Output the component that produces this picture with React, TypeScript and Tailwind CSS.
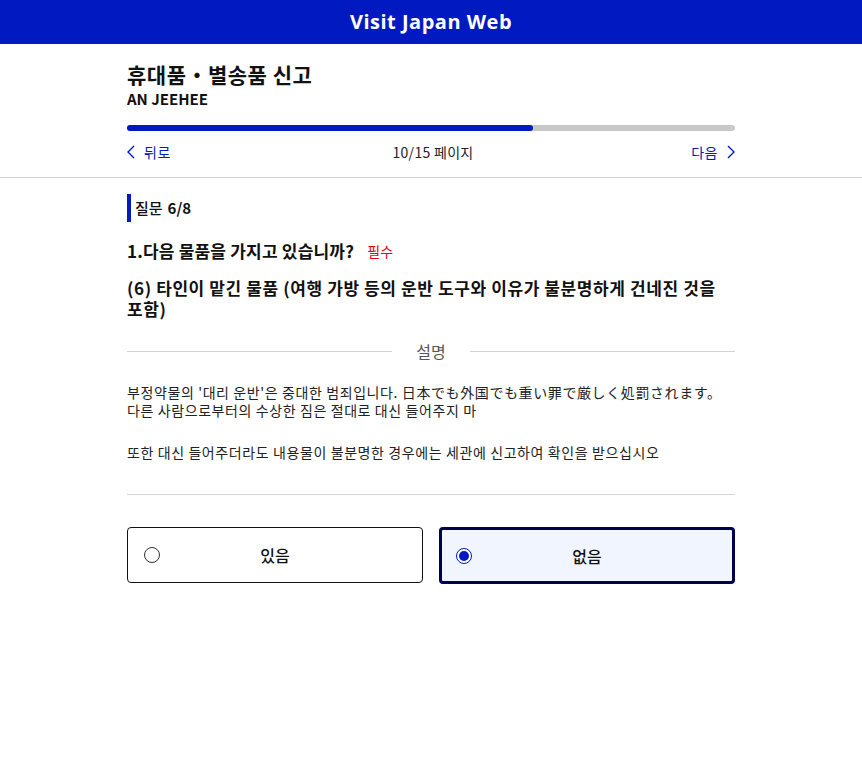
import React from 'react';

const kr = { fontFamily: '"Noto Sans CJK KR", "Noto Sans", sans-serif' };

const Radio = ({ checked }: { checked: boolean }) => (
  <span
    className={`flex h-[16px] w-[16px] items-center justify-center rounded-full border ${
      checked ? 'border-[#0019c0]' : 'border-[#333]'
    } bg-white`}
  >
    {checked && <span className="h-[10px] w-[10px] rounded-full bg-[#0019c0]" />}
  </span>
);

const App = () => {
  return (
    <div className="min-h-[760px] bg-white text-[#111]" style={kr}>
      <header className="flex h-[44px] items-center justify-center bg-[#0019c0]">
        <span
          className="text-[20px] font-bold tracking-[0.5px] text-white"
          style={{ fontFamily: '"Open Sans", sans-serif' }}
        >
          Visit Japan Web
        </span>
      </header>

      <section className="border-b border-[#cfcfcf]">
        <div className="mx-auto w-[608px] pt-[15px] pb-[15px]">
          <h1 className="text-[21px] font-bold leading-[30px] tracking-[0.5px]">휴대품・별송품 신고</h1>
          <p className="text-[15px] font-bold leading-[20px]">AN JEEHEE</p>
          <div className="mt-[16px] h-[6px] w-full rounded-full bg-[#c8c8c8]">
            <div className="h-full w-[66.7%] rounded-full bg-[#0019c0]" />
          </div>
          <div className="mt-[11px] flex items-center justify-between text-[14px] leading-[20px]">
            <button className="flex items-center gap-[9px] tracking-[0.5px] text-[#0019c0]">
              <svg width="8" height="14" viewBox="0 0 8 14" fill="none">
                <path d="M7 1L1 7l6 6" stroke="#0019c0" strokeWidth="1.4" />
              </svg>
              뒤로
            </button>
            <span className="pl-[4px] tracking-[0.3px] text-[#222]">10/15 페이지</span>
            <button className="flex items-center gap-[9px] tracking-[0.5px] text-[#0019c0]">
              다음
              <svg width="8" height="14" viewBox="0 0 8 14" fill="none">
                <path d="M1 1l6 6-6 6" stroke="#0019c0" strokeWidth="1.4" />
              </svg>
            </button>
          </div>
        </div>
      </section>

      <main className="mx-auto w-[608px] pt-[16px]">
        <div className="flex h-[28px] items-center border-l-[4px] border-[#0019c0] pl-[4px] text-[15px]">
          <span className="font-medium">질문</span>
          <span className="ml-[5px] font-bold">6/8</span>
        </div>

        <div className="mt-[17px] flex items-center text-[17px] font-bold leading-[24px] tracking-[0.2px]">
          1.다음 물품을 가지고 있습니까?
          <span className="ml-[13px] text-[14px] font-normal text-[#e60012]">필수</span>
        </div>

        <p className="mt-[14px] text-[17px] font-bold leading-[21px] tracking-[0.6px]">
          (6) 타인이 맡긴 물품 (여행 가방 등의 운반 도구와 이유가 불분명하게 건네진 것을 포함)
        </p>

        <div className="mt-[20px] flex items-center gap-[24px]">
          <div className="h-px flex-1 bg-[#d4d4d4]" />
          <span className="text-[16px] text-[#555]">설명</span>
          <div className="h-px flex-1 bg-[#d4d4d4]" />
        </div>

        <div className="mt-[20px] text-[14px] leading-[18px] tracking-[0.6px] text-[#222]">
          <p>
            부정약물의 '대리 운반'은 중대한 범죄입니다. 日本でも外国でも重い罪で厳しく処罰されます。
          </p>
          <p>다른 사람으로부터의 수상한 짐은 절대로 대신 들어주지 마</p>
          <p className="mt-[24px]">
            또한 대신 들어주더라도 내용물이 불분명한 경우에는 세관에 신고하여 확인을 받으십시오
          </p>
        </div>

        <div className="mt-[33px] h-px bg-[#d4d4d4]" />

        <div className="mt-[32px] grid grid-cols-2 gap-[16px]">
          <button className="flex h-[56px] items-center rounded-[4px] border border-[#111] bg-white px-[16px]">
            <Radio checked={false} />
            <span className="flex-1 pr-[16px] text-center text-[16px] font-medium">있음</span>
          </button>
          <button className="flex h-[57px] items-center rounded-[4px] border-[3px] border-[#00004d] bg-[#f0f5ff] px-[14px]">
            <Radio checked />
            <span className="flex-1 pr-[16px] text-center text-[16px] font-medium">없음</span>
          </button>
        </div>
      </main>
    </div>
  );
};

export default App;
